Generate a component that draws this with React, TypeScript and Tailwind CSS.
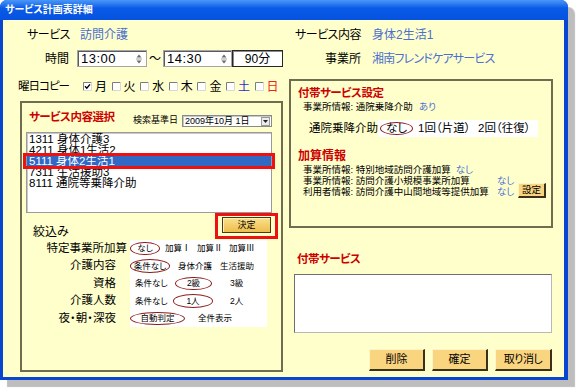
import React from 'react';

const BLUE_TEXT = 'text-[#4c6fd0]';

function Circled({ children, className }: { children: React.ReactNode; className: string }) {
  return (
    <span className={`relative flex h-full shrink-0 items-center justify-center ${className}`}>
      {children}
      <span className="absolute inset-x-0 inset-y-[2px] rounded-[50%] border-[1.5px] border-[#8e1c1c]" />
    </span>
  );
}

function CheckBox({ checked }: { checked?: boolean }) {
  return (
    <svg width="9" height="9" viewBox="0 0 9 9" className="shrink-0">
      <path d="M0.5 8.5 V0.5 H8.5" fill="none" stroke="#7d7d7d" />
      <path d="M0.5 8.5 H8.5 V0.5" fill="none" stroke="#d8d8d8" />
      <rect x="1" y="1" width="7" height="7" fill="#fff" />
      {checked && <path d="M2 4.3 L3.8 6.2 L7 2.4" fill="none" stroke="#000" strokeWidth="1.4" />}
    </svg>
  );
}

function Spinner() {
  return (
    <span className="flex h-full w-[14px] items-center justify-center">
      <svg width="8" height="12" viewBox="0 0 8 12">
        <path d="M4 1.5 L6.5 4.5 L1.5 4.5Z" fill="#6a6a6a" />
        <path d="M1 6 H7" stroke="#a0a0a0" />
        <path d="M1.5 7.5 L6.5 7.5 L4 10.5Z" fill="#6a6a6a" />
      </svg>
    </span>
  );
}

function TimeBox({ value, className }: { value: string; className: string }) {
  return (
    <div
      className={`flex h-[17px] items-center border border-[#a5a5a5] bg-white shadow-[inset_1px_1px_0_#5a5a5a] ${className}`}
    >
      <span className="ml-[3px] flex-1 text-[13px] leading-none tracking-[0.5px]">{value}</span>
      <Spinner />
    </div>
  );
}

function GoldButton({ label, className }: { label: string; className: string }) {
  return (
    <div
      className={`flex items-center justify-center border-t border-l border-t-[#fff4c8] border-l-[#fff4c8] border-r-2 border-b-2 border-r-[#3a301c] border-b-[#3a301c] bg-[#fad57f] leading-none ${className}`}
    >
      {label}
    </div>
  );
}

const days = [
  { d: '月', c: '', checked: true },
  { d: '火', c: '' },
  { d: '水', c: '' },
  { d: '木', c: '' },
  { d: '金', c: '' },
  { d: '土', c: 'text-[#2a2ad8]' },
  { d: '日', c: 'text-[#f02020]' },
];

const listItems = ['1311 身体介護3', '4211 身体1生活2', '5111 身体2生活1', '7311 生活援助3', '8111 通院等乗降介助'];

const filterLabels = ['特定事業所加算', '介護内容', '資格', '介護人数', '夜・朝・深夜'];

function LeftColumn() {
  return (
    <div className="ml-[17px] flex w-[263px] flex-col">
      <div className="mt-[7px] flex h-[16px] items-center text-[12px] leading-none">
        <span className="flex w-[50px] justify-end tracking-[-0.5px]">サービス</span>
        <span className={`ml-[10px] ${BLUE_TEXT}`}>訪問介護</span>
      </div>

      <div className="mt-[7px] flex h-[17px] items-center text-[12px] leading-none">
        <span className="w-[49px] text-right">時間</span>
        <TimeBox value="13:00" className="ml-[8px] w-[70px]" />
        <span className="w-[16px] text-center">～</span>
        <TimeBox value="14:30" className="w-[69px]" />
        <div className="flex h-[17px] w-[51px] items-center justify-center border border-[#262626] bg-white shadow-[inset_1px_1px_0_#8a8a8a]">
          90分
        </div>
      </div>

      <div className="mt-[13px] flex h-[13px] items-center text-[12px] leading-none">
        <span className="flex w-[49px] shrink-0 justify-end text-[11.5px] tracking-[-1px]">曜日コピー</span>
        <div className="ml-[14px] flex">
          {days.map((x) => (
            <span key={x.d} className="flex w-[28.6px] items-center">
              <CheckBox checked={x.checked} />
              <span className={`ml-[3px] ${x.c}`}>{x.d}</span>
            </span>
          ))}
        </div>
      </div>

      <div className="mt-[8px] flex h-[271px] flex-col border-2 border-[#716c4f]">
        <div className="mt-[5px] flex h-[19px] items-end">
          <span className="mb-[4px] ml-[7px] text-[11.5px] font-bold leading-none tracking-[-0.5px] text-[#cc0000]">サービス内容選択</span>
          <span className="mb-[2px] ml-auto mr-[4px] text-[9px] leading-none">検索基準日</span>
          <div className="mr-[9px] flex h-[12px] w-[90px] items-center border border-[#8a8a8a] bg-white shadow-[inset_1px_1px_0_#c8c8c8]">
            <span className="ml-[2px] flex-1 text-[9px] leading-none">2009年10月 1日</span>
            <span className="mr-[1px] flex h-[9px] w-[9px] items-center justify-center border border-[#9a9a9a] bg-[#ececec]">
              <svg width="5" height="3" viewBox="0 0 5 3">
                <path d="M0 0 H5 L2.5 3Z" fill="#222" />
              </svg>
            </span>
          </div>
        </div>

        <div className="ml-[4px] mt-[5px] h-[81px] w-[246px] border border-[#9a9a9a] bg-white pt-[1px] shadow-[inset_1px_1px_0_#c8c8c8]">
          {listItems.map((t, i) =>
            i === 2 ? (
              <div key={t} className="relative h-[11px]">
                <div className="h-full overflow-hidden bg-[#3168c4] pl-[2px] text-[11.5px] leading-[11px] text-white">
                  {t}
                </div>
                <div className="absolute -top-[3px] -bottom-[2px] -left-[4px] -right-[4px] border-[3px] border-[#ee1111]" />
              </div>
            ) : (
              <div key={t} className="h-[11px] pl-[2px] text-[11.5px] leading-[11px]">
                {t}
              </div>
            )
          )}
        </div>

        <div className="flex h-[26px] items-end justify-between">
          <span className="ml-[11px] text-[12px] leading-[14px]">絞込み</span>
          <div className="mr-[3px] h-[26px] border-[3px] border-[#ee1111] px-[4px] pt-[1px]">
            <div className="flex h-[16px] w-[49px] items-center justify-center border border-[#4a3a12] bg-linear-to-b from-[#fbe08a] to-[#eebd4c] text-[9px] leading-none shadow-[inset_1px_1px_0_#fff2c0]">
              決定
            </div>
          </div>
        </div>

        <div className="mt-[0.5px] flex">
          <div className="flex w-[94px] flex-col text-[11.5px] leading-none">
            {filterLabels.map((l, i) => (
              <div key={l} className={`flex h-[17.5px] items-center justify-end ${i === 0 ? '-mr-[11px]' : ''}`}>
                {l}
              </div>
            ))}
          </div>
          <div className="ml-[14px] flex w-[137px] flex-col bg-white text-[8.5px] leading-none">
            <div className="flex h-[17.5px] items-center">
              <Circled className="w-[30px]">なし</Circled>
              <span className="ml-[5px] w-[24px] shrink-0">加算Ⅰ</span>
              <span className="ml-[8px] w-[24px] shrink-0">加算Ⅱ</span>
              <span className="ml-[8px]">加算Ⅲ</span>
            </div>
            <div className="flex h-[17.5px] items-center">
              <Circled className="w-[40px]">条件なし</Circled>
              <span className="ml-[8px] w-[32px] shrink-0">身体介護</span>
              <span className="ml-[10px]">生活援助</span>
            </div>
            <div className="flex h-[17.5px] items-center">
              <span className="ml-[5px] w-[30px] shrink-0">条件なし</span>
              <Circled className="ml-[10px] w-[37px]">2級</Circled>
              <span className="ml-[18px]">3級</span>
            </div>
            <div className="flex h-[17.5px] items-center">
              <span className="ml-[5px] w-[30px] shrink-0">条件なし</span>
              <Circled className="ml-[8px] w-[40px]">1人</Circled>
              <span className="ml-[17px]">2人</span>
            </div>
            <div className="flex h-[17.5px] items-center">
              <Circled className="w-[55px]">自動判定</Circled>
              <span className="ml-[13px]">全件表示</span>
            </div>
          </div>
        </div>
      </div>
    </div>
  );
}

function RightColumn() {
  return (
    <div className="ml-[6px] flex w-[264px] flex-col">
      <div className="mt-[7px] flex h-[16px] items-center text-[12px] leading-none">
        <span className="flex w-[72px] justify-end tracking-[-0.5px]">サービス内容</span>
        <span className={`ml-[11px] ${BLUE_TEXT}`}>身体2生活1</span>
      </div>
      <div className="mt-[7px] flex h-[17px] items-center text-[12px] leading-none">
        <span className="w-[72px] text-right">事業所</span>
        <span className={`ml-[11px] tracking-[-0.8px] ${BLUE_TEXT}`}>湘南フレンドケアサービス</span>
      </div>

      <div className="mt-[12px] flex h-[149px] flex-col border-2 border-[#716c4f]">
        <div className="ml-[7px] mt-[4.5px] h-[14px] text-[11.5px] font-bold leading-[14px] tracking-[-0.5px] text-[#cc0000]">付帯サービス設定</div>
        <div className="ml-[12px] mt-[2px] flex h-[11px] items-center text-[9.5px] leading-none">
          <span>事業所情報: 通院乗降介助</span>
          <span className={`ml-[6px] ${BLUE_TEXT}`}>あり</span>
        </div>
        <div className="mt-[7.5px] flex h-[17px] items-center">
          <span className="ml-[18px] w-[69px] shrink-0 text-[11.5px] leading-none">通院乗降介助</span>
          <div className="flex h-[17px] w-[160px] items-center bg-white text-[11.5px] leading-none">
            <Circled className="ml-[2px] w-[33px]">なし</Circled>
            <span className="ml-[5px] w-[60px] shrink-0">1回（片道）</span>
            <span>2回（往復）</span>
          </div>
        </div>
        <div className="ml-[7px] mt-[12px] h-[14px] text-[12px] font-bold leading-[14px] text-[#cc0000]">加算情報</div>
        <div className="ml-[12px] mt-[1.5px] flex flex-col text-[9.5px] leading-none">
          <div className="flex h-[11px] items-center">
            <span>事業所情報: 特別地域訪問介護加算</span>
            <span className={`ml-[5px] ${BLUE_TEXT}`}>なし</span>
          </div>
          <div className="flex h-[11px] items-center">
            <span className="w-[194px] shrink-0">事業所情報: 訪問介護小規模事業所加算</span>
            <span className={BLUE_TEXT}>なし</span>
          </div>
          <div className="flex h-[11px] items-center">
            <span className="w-[194px] shrink-0">利用者情報: 訪問介護中山間地域等提供加算</span>
            <span className={`w-[14px] shrink-0 ${BLUE_TEXT}`}>なし</span>
            <GoldButton label="設定" className="mb-[3px] ml-[7px] h-[15px] w-[28px] shrink-0 text-[9.5px]" />
          </div>
        </div>
      </div>

      <div className="ml-[8px] mt-[24px] h-[14px] text-[11.5px] font-bold leading-[14px] tracking-[-0.5px] text-[#cc0000]">付帯サービス</div>
      <div className="ml-[5px] mt-[8px] h-[59px] w-[258px] border border-t-[#6e6e6e] border-l-[#6e6e6e] border-r-[#b8b8b8] border-b-[#b8b8b8] bg-white" />

      <div className="mr-[1px] mt-[16px] flex justify-end gap-[7px] text-[11px]">
        <GoldButton label="削除" className="h-[22px] w-[56px]" />
        <GoldButton label="確定" className="h-[22px] w-[56px]" />
        <GoldButton label="取り消し" className="h-[22px] w-[57px] tracking-[-0.5px]" />
      </div>
    </div>
  );
}

export default function App() {
  return (
    <div className="relative h-[389px] w-[577px] overflow-hidden whitespace-nowrap bg-white font-['Liberation_Sans','Noto_Sans_CJK_JP',sans-serif] text-black [font-feature-settings:'palt']">
      <div className="flex h-[380px] w-[568px] flex-col rounded-t-[7px] bg-[#0846d2] shadow-[7px_7px_1px_#bdbdbd]">
        <div className="flex h-[20px] shrink-0 items-center rounded-t-[7px] bg-linear-to-b from-[#4a97f7] via-[#0b5be8] via-40% to-[#0552df] pl-[5px]">
          <span className="text-[10px] font-bold leading-none text-white">サービス計画表詳細</span>
        </div>
        <div className="mb-[3px] ml-[3px] mr-[4px] flex flex-1 bg-[#ffffcc]">
          <LeftColumn />
          <RightColumn />
        </div>
      </div>
    </div>
  );
}
